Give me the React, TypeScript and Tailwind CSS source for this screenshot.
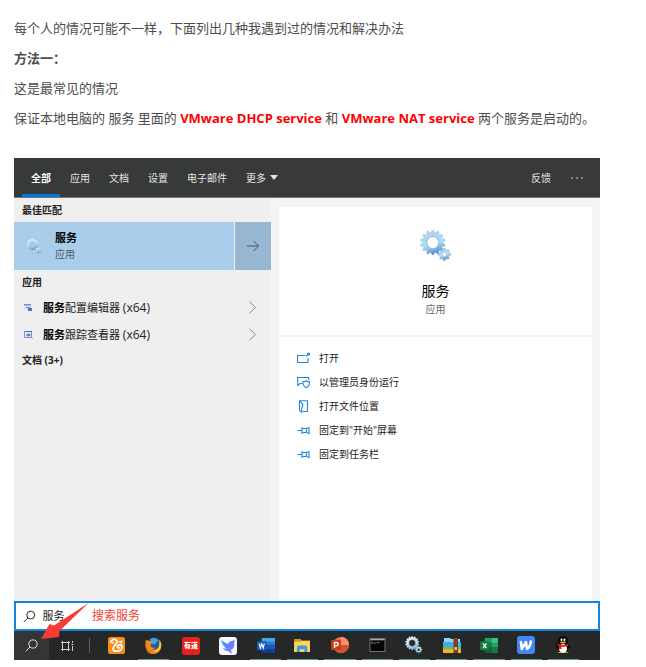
import React from 'react';

function gearPath(cx: number, cy: number, outer: number, inner: number, teeth: number, hole: number) {
  const step = (Math.PI * 2) / teeth;
  const at = (r: number, a: number) => `${(cx + r * Math.cos(a)).toFixed(2)} ${(cy + r * Math.sin(a)).toFixed(2)}`;
  let d = '';
  for (let i = 0; i < teeth; i++) {
    const a = i * step - Math.PI / 2;
    d += `${i ? 'L' : 'M'}${at(inner, a - step * 0.3)}L${at(outer, a - step * 0.18)}L${at(outer, a + step * 0.18)}L${at(inner, a + step * 0.3)}`;
  }
  return `${d}ZM${cx - hole} ${cy}a${hole} ${hole} 0 1 0 ${hole * 2} 0a${hole} ${hole} 0 1 0 ${-hole * 2} 0Z`;
}

function Gears({ id, className, from, mid, to }: { id: string; className: string; from: string; mid: string; to: string }) {
  return (
    <svg viewBox="0 0 32 32" className={className} aria-hidden="true">
      <defs>
        <linearGradient id={id} x1="0" y1="0" x2="0.3" y2="1">
          <stop offset="0" stopColor={from} />
          <stop offset="0.65" stopColor={mid} />
          <stop offset="1" stopColor={to} />
        </linearGradient>
      </defs>
      <path d={gearPath(12.8, 12.6, 12.4, 10.4, 14, 5.8)} fill={`url(#${id})`} fillRule="evenodd" stroke="#a3b6c8" strokeWidth="0.4" />
      <circle cx="12.8" cy="12.6" r="6.3" fill="none" stroke="#9db3c6" strokeWidth="0.7" />
      <path d={gearPath(24.4, 24.4, 6.2, 4.7, 8, 2.2)} fill={`url(#${id})`} fillRule="evenodd" stroke="#7b98b8" strokeWidth="0.4" />
    </svg>
  );
}

function SearchGlyph({ className }: { className: string }) {
  return (
    <svg viewBox="0 0 13 13" className={className} fill="none" stroke="currentColor" strokeWidth="1" aria-hidden="true">
      <circle cx="8" cy="5" r="4.1" />
      <path d="M5.1 7.9 0.8 12.2" />
    </svg>
  );
}

const tabs = ['全部', '应用', '文档', '设置', '电子邮件'];

const openIcon = (
  <>
    <path d="M8.5 3.5h-8v7h10.500v-4.500" />
    <path d="M9.200 4.300 11 2.500" />
    <circle cx="11.500" cy="2" r="1" fill="currentColor" />
  </>
);
const adminIcon = (
  <>
    <path d="M5.500 7.500H3L.8 9.400V7.200L.6 1.500h11V4" />
    <path d="M9.200 4.700c1 .8 2 1.200 3.300 1.200 0 2.800-.8 4.600-3.300 5.800-2.500-1.200-3.300-3-3.300-5.800 1.300 0 2.300-.4 3.300-1.200Z" />
  </>
);
const folderIcon = (
  <>
    <path d="M2.500.8h8v10.700h-5" />
    <path d="M2.500.8v9.700l2.200 1.800V8L5.700 6.500V4L2.500.8Z" />
  </>
);
const pinIcon = (
  <>
    <path d="M.5 6.500h4.500" />
    <path d="M5 3v7M5 4.500h4.500l2.500-1v6l-2.500-1H5M9.500 4.500v4" />
  </>
);

const actions = [
  { label: '打开', icon: openIcon },
  { label: '以管理员身份运行', icon: adminIcon },
  { label: '打开文件位置', icon: folderIcon },
  { label: '固定到"开始"屏幕', icon: pinIcon },
  { label: '固定到任务栏', icon: pinIcon },
];

const apps: { name: string; running: boolean; icon: React.ReactNode }[] = [
  {
    name: 'UC',
    running: false,
    icon: (
      <svg viewBox="0 0 18 18" className="size-[17px]">
        <rect width="18" height="18" rx="3" fill="#fb8c1c" />
        <path d="M3 5.500C4 2 9.500 1.500 9.500 5c0 2-2 3.500-3.500 5.500-1.500 2-.5 4.500 2.500 4.500 4 0 6.500-2 6.500-4.500S11 7.500 10.200 9.500c-.6 1.500.8 2.500 2 1.800" fill="none" stroke="#fff" strokeWidth="1.900" strokeLinecap="round" />
        <path d="m11 5.500 3.500-1-.5 2.500M4 6.500l2.500-.5" fill="none" stroke="#fff" strokeWidth="1.300" />
      </svg>
    ),
  },
  {
    name: 'Firefox',
    running: true,
    icon: (
      <svg viewBox="0 0 18 18" className="size-[17px]">
        <circle cx="9.500" cy="8.500" r="8" fill="#2459a8" />
        <path d="M6 2c3-2 7 0 8 2l-4 4-4-1Z" fill="#43a7d8" />
        <path d="M1 3c1 1 2 1 3 1 1 0 2 1 4 1-1 2-2 2-2 4 0 2 2 3 5 2-1 2-3 2-4 2 5 2 9-2 8-8 2 2 3 6 1 9-3 5-10 5-13 2C0 13 0 7 1 3Z" fill="#f28a16" />
        <path d="M15 3c3 3 3 8 0 11-2 2-5 2-6 1 5-1 7-5 6-12Z" fill="#ffc928" />
        <path d="M1 8c0 5 4 8 8 8-4 1-9-2-8-8Z" fill="#d9471c" />
      </svg>
    ),
  },
  {
    name: '有道',
    running: false,
    icon: (
      <span className="flex size-[18px] items-center justify-center rounded-[3px] bg-[#e6211b] text-[7px] font-black text-white">有道</span>
    ),
  },
  {
    name: '迅雷',
    running: false,
    icon: (
      <svg viewBox="0 0 18 18" className="size-[18px]">
        <defs>
          <linearGradient id="bird" x1="0" y1="0" x2="1" y2="1">
            <stop offset="0" stopColor="#39a7fa" />
            <stop offset="0.500" stopColor="#647cff" />
            <stop offset="1" stopColor="#a48aff" />
          </linearGradient>
        </defs>
        <rect width="18" height="18" rx="3" fill="#f5f8ff" />
        <path d="M2 3c3 2 5 3 7 4 1-2 2-3 4-3l3-1-1 3c1 4-1 6-3 7l1 4-4-3c-2 0-4-1-5-3l4 1C5 10 3 7 2 3Z" fill="url(#bird)" />
      </svg>
    ),
  },
  {
    name: 'Word',
    running: true,
    icon: (
      <svg viewBox="0 0 19 18" className="h-[17px] w-[18px]">
        <path d="M5 1h14v4.500H5z" fill="#41a5ee" />
        <path d="M5 5h14v4H5z" fill="#2b7cd3" />
        <path d="M5 9h14v4H5z" fill="#185abd" />
        <path d="M5 13h14v4H5z" fill="#103f91" />
        <rect y="4.500" width="10" height="9.500" rx="1" fill="#185abd" />
        <path d="m2.300 6.800 1.200 5 1.500-4.500 1.500 4.500 1.200-5" fill="none" stroke="#fff" strokeWidth="1.200" />
      </svg>
    ),
  },
  {
    name: '文件资源管理器',
    running: true,
    icon: (
      <svg viewBox="0 0 18 16" className="h-[15px] w-[17px]">
        <path d="M0 1h7l1 2h9v3H0Z" fill="#d99a13" />
        <path d="M0 4h7l1-1h9v12H0Z" fill="#ffd45d" />
        <path d="M3 15V10q0-2 2-2h7q2 0 2 2v5h-3v-3H6v3Z" fill="#3c9de1" />
      </svg>
    ),
  },
  {
    name: 'PowerPoint',
    running: true,
    icon: (
      <svg viewBox="0 0 18 18" className="size-[18px]">
        <circle cx="10" cy="9" r="8" fill="#ed6c47" />
        <path d="M10 1a8 8 0 0 1 8 8h-8Z" fill="#ff8f6b" />
        <path d="M2 9h16a8 8 0 0 1-16 0Z" fill="#d35230" />
        <rect y="4" width="10" height="10" rx="1" fill="#c43e1c" />
        <path d="M3.500 12V6.500h2q1.700 0 1.700 1.600T5.500 9.800h-2" fill="none" stroke="#fff" strokeWidth="1.300" />
      </svg>
    ),
  },
  {
    name: '命令提示符',
    running: true,
    icon: (
      <svg viewBox="0 0 17 15" className="h-[14px] w-[17px]">
        <rect x="0.500" y="0.500" width="16" height="14" fill="#050505" stroke="#777" />
        <path d="M1 1h15v1.500H1z" fill="#aaa" />
        <path d="m2 4 1.500 1L2 6M4.500 5.500h2M7.500 5h3" fill="none" stroke="#bbb" strokeWidth="0.800" />
      </svg>
    ),
  },
  {
    name: '服务',
    running: true,
    icon: <Gears id="task-gears" className="size-[18px]" from="#ffffff" mid="#b9e2f2" to="#85b4d8" />,
  },
  {
    name: '压缩',
    running: true,
    icon: (
      <svg viewBox="0 0 18 17" className="h-[17px] w-[18px]">
        <path d="M1 1h6l1 1h9v9H1Z" fill="#8bd5fa" />
        <path d="M0 5h18v6H0Z" fill="#45a9eb" />
        <path d="M0 10h18v3H0Z" fill="#78bd45" />
        <path d="M0 12.500h18V16H0Z" fill="#f7b52b" />
        <path d="M10.500 1H15v15h-4.500Z" fill="#7b3f1c" />
        <path d="M11.500 10h2.500v3h-2.500Z" fill="#e2c08d" />
      </svg>
    ),
  },
  {
    name: 'Excel',
    running: true,
    icon: (
      <svg viewBox="0 0 19 18" className="h-[17px] w-[18px]">
        <path d="M5 1h7v5.500H5z" fill="#21a366" />
        <path d="M12 1h7v5.500h-7z" fill="#33c481" />
        <path d="M5 6h7v5.500H5z" fill="#107c41" />
        <path d="M12 6h7v5.500h-7z" fill="#21a366" />
        <path d="M5 11h14v6H5z" fill="#185c37" />
        <path d="M12 11h7v6h-7z" fill="#107c41" />
        <rect y="4.500" width="10" height="9.500" rx="1" fill="#107c41" />
        <path d="m3.200 6.800 3.600 5M6.800 6.800l-3.600 5" stroke="#fff" strokeWidth="1.300" />
      </svg>
    ),
  },
  {
    name: 'WPS',
    running: true,
    icon: (
      <svg viewBox="0 0 18 18" className="size-[18px]">
        <rect width="18" height="18" rx="3" fill="#4285f4" />
        <path d="m3.800 5 1 8L9 6l1 7c2-1 3.500-4 4-8.500" fill="none" stroke="#fff" strokeWidth="2.500" strokeLinejoin="round" />
      </svg>
    ),
  },
  {
    name: 'QQ',
    running: true,
    icon: (
      <svg viewBox="0 0 16 18" className="h-[18px] w-4">
        <path d="M8 0c3.500 0 5 2.500 5 6 2 3 2.800 5 2 7l-2-1.500c0 3-2 5-5 5s-5-2-5-5L1 13c-.8-2 0-4 2-7 0-3.500 1.500-6 5-6Z" fill="#090909" />
        <ellipse cx="8" cy="12.500" rx="4" ry="4.500" fill="#fff" />
        <ellipse cx="6.500" cy="3.800" rx="1" ry="1.400" fill="#fff" />
        <ellipse cx="9.500" cy="3.800" rx="1" ry="1.400" fill="#fff" />
        <ellipse cx="8" cy="6.500" rx="3" ry="1" fill="#f7ab18" />
        <path d="M2.500 7.500c4 2 7 2 11 0v2c-3 1.500-5 1.500-7 1.300V13H4v-3L2.500 9.500Z" fill="#eb1c23" />
        <path d="M2.500 17c1-1.500 3-1.500 5 0ZM8.500 17c2-1.500 4-1.500 5 0Z" fill="#f7ab18" />
      </svg>
    ),
  },
];

function ResultRow({ rest, children }: { rest: string; children: React.ReactNode }) {
  return (
    <button type="button" className="flex h-[27px] w-full items-center pr-[14px] pl-[10px] text-left text-[11px] text-[#222]">
      <svg viewBox="0 0 9 9" className="mr-[10px] size-[9px]" aria-hidden="true">{children}</svg>
      <span>
        <b className="text-black">服务</b>{rest} <span className="text-[12px]">(x64)</span>
      </span>
      <svg viewBox="0 0 9 13" className="ml-auto h-[13px] w-[9px]" fill="none" stroke="#888" aria-hidden="true">
        <path d="m1.500.8 6 5.700-6 5.700" />
      </svg>
    </button>
  );
}

export default function App() {
  return (
    <main className="bg-white pt-[17px] pr-[46px] pb-[7px] pl-[14px] font-['Open_Sans','Noto_Sans_CJK_SC',sans-serif] leading-4">
      <article className="-mr-8 flex flex-col gap-2 text-[13px] leading-[22px] text-[#4d4d4d]">
        <p>每个人的情况可能不一样，下面列出几种我遇到过的情况和解决办法</p>
        <h2 className="font-bold">方法一：</h2>
        <p>这是最常见的情况</p>
        <p>
          保证本地电脑的 服务 里面的 <strong className="text-[#f00]">VMware DHCP service</strong> 和{' '}
          <strong className="text-[#f00]">VMware NAT service</strong> 两个服务是启动的。
        </p>
      </article>

      <section className="relative mt-[29px]">
        <header className="flex h-10 items-stretch border-b border-[#777] bg-[#383939] pr-[17px] pl-2 text-[10px] text-[#e4e4e4]">
          <nav className="flex gap-px">
            {tabs.map((tab, i) => (
              <button
                key={tab}
                type="button"
                className={i === 0 ? 'border-b-[3px] border-[#0078d7] px-[9px] pt-[3px] font-bold text-white' : 'px-[9px]'}
              >
                {tab}
              </button>
            ))}
            <button type="button" className="flex items-center gap-1 px-[9px]">
              更多
              <svg viewBox="0 0 8 5" className="h-[5px] w-2" fill="currentColor" aria-hidden="true"><path d="M0 0h8L4 5Z" /></svg>
            </button>
          </nav>
          <button type="button" className="mr-5 ml-auto">反馈</button>
          <button type="button" aria-label="更多选项">
            <svg viewBox="0 0 12 2" className="h-[2px] w-3" fill="currentColor" aria-hidden="true">
              <circle cx="1" cy="1" r="0.800" /><circle cx="6" cy="1" r="0.800" /><circle cx="11" cy="1" r="0.800" />
            </svg>
          </button>
        </header>

        <div className="flex h-[403px] bg-[#f4f4f4]">
          <div className="w-[257px] shrink-0 bg-[#efefef] text-[10px] text-[#222]">
            <h3 className="px-2 pt-1 pb-1 font-bold">最佳匹配</h3>
            <div className="flex h-12 gap-px">
              <button type="button" className="flex flex-1 items-center bg-[#a9cdea] pl-3 text-left">
                <Gears id="row-gears" className="mr-[13px] size-4" from="#eef7ff" mid="#b4e3f8" to="#6f9ed0" />
                <span className="flex flex-col">
                  <b className="text-[11px] text-black">服务</b>
                  <span className="text-[#4c5b68]">应用</span>
                </span>
              </button>
              <button type="button" aria-label="展开" className="flex w-9 items-center justify-center bg-[#97b7d3]">
                <svg viewBox="0 0 12 12" className="size-3" fill="none" stroke="#48596a" aria-hidden="true">
                  <path d="M0 6h11.500M6.500 1l5 5-5 5" />
                </svg>
              </button>
            </div>
            <h3 className="px-2 pt-1 pb-1 font-bold">应用</h3>
            <ResultRow rest="配置编辑器">
              <path d="M0 1h7v6H0z" fill="#dbe6f5" /><path d="M0 1h7v1.500H0zM2 4h4v1H2z" fill="#6c8cd4" /><path d="M4 5h4v3H4z" fill="#7065b8" />
            </ResultRow>
            <ResultRow rest="跟踪查看器">
              <path d="M.5 1.500h7v6h-7z" fill="#dbe9f8" stroke="#7994c9" /><path d="M1 1h7v1H1z" fill="#4870c0" /><path d="M3 4h3v2H3zM7 7l2 2" fill="#5b8dc9" stroke="#777" strokeWidth="0.500" />
            </ResultRow>
            <h3 className="px-2 pt-1 font-bold">文档 (3+)</h3>
          </div>

          <div className="mx-2 mt-[9px] flex-1 bg-white">
            <div className="flex h-[130px] flex-col items-center border-b-2 border-[#f3f3f3] pt-[23px]">
              <Gears id="hero-gears" className="size-8" from="#b4c9f0" mid="#a4e4fa" to="#5c8fd6" />
              <h2 className="mt-[19px] text-[14px] leading-5 text-black">服务</h2>
              <p className="text-[10px] text-[#666]">应用</p>
            </div>
            <ul className="pt-[9px] text-[10px] text-[#222]">
              {actions.map(({ label, icon }) => (
                <li key={label}>
                  <button type="button" className="flex h-6 items-center gap-[9px] pl-[18px]">
                    <svg viewBox="0 0 13 13" className="size-[13px] text-[#2089e0]" fill="none" stroke="currentColor" strokeWidth="1.1" aria-hidden="true">{icon}</svg>
                    {label}
                  </button>
                </li>
              ))}
            </ul>
          </div>
        </div>

        <label className="flex h-[30px] items-center border-2 border-[#1484dc] bg-white pl-[7px] text-[#222]">
          <SearchGlyph className="mr-[7px] size-[13px]" />
          <input aria-label="搜索" defaultValue="服务" className="w-full min-w-0 text-[11px] outline-none" />
        </label>

        <footer className="flex h-[29px] items-stretch bg-[#262727] pr-[18px]">
          <button type="button" aria-label="搜索" className="flex w-[35px] items-center justify-center bg-[#343535] text-[#ddd]">
            <SearchGlyph className="size-[13px]" />
          </button>
          <button type="button" aria-label="任务视图" className="flex w-9 items-center justify-center">
            <svg viewBox="0 0 13 12" className="h-3 w-[13px]" fill="none" stroke="#ccc" aria-hidden="true">
              <path d="M0 2.500h9M0 9.500h9M1.500 1v10M7.500 1v10M11.500 1v2M11.500 6v5M10.500 4.500h2" />
            </svg>
          </button>
          <span className="mr-[8px] my-[7px] w-[5px] border-r border-[#606060]" />
          <ul className="flex flex-1">
            {apps.map(({ name, running, icon }) => (
              <li key={name} className="flex flex-1">
                <button
                  type="button"
                  aria-label={name}
                  className={
                    running
                      ? 'mx-[3px] flex flex-1 items-center justify-center border-b border-[#6f8fa5]'
                      : 'mx-[3px] flex flex-1 items-center justify-center'
                  }
                >
                  {icon}
                </button>
              </li>
            ))}
          </ul>
        </footer>

        <div className="pointer-events-none absolute bottom-5 left-[26px] flex items-start">
          <svg viewBox="0 0 50 37" className="h-[37px] w-[50px]" aria-hidden="true">
            <path d="M48.500 0 19.500 28l-.5 6L1 36 9.500 21l4.500 1.500Z" fill="#f43b36" />
          </svg>
          <span className="mt-[5px] ml-[2px] text-[12px] text-[#f5413c]">搜索服务</span>
        </div>
      </section>
    </main>
  );
}
